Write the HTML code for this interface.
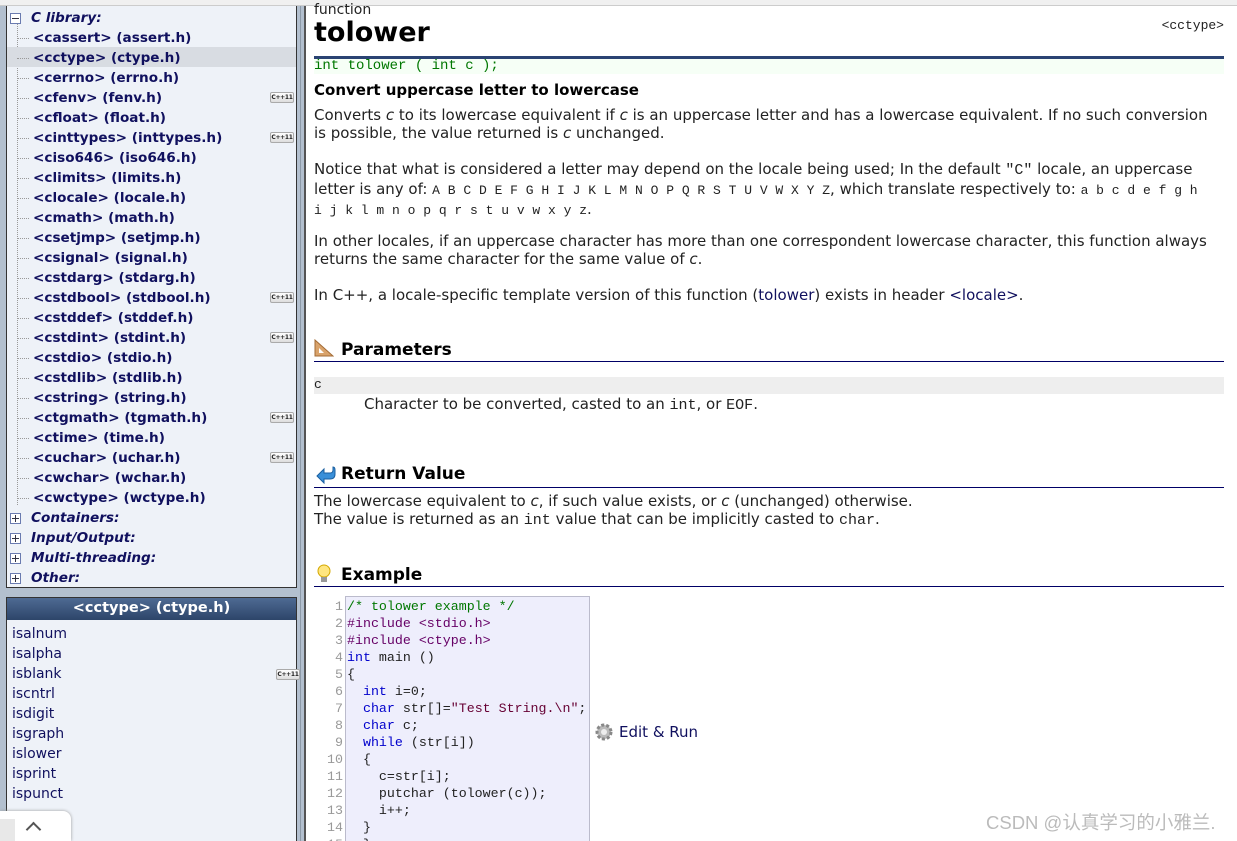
<!DOCTYPE html>
<html><head><meta charset="utf-8"><style>
*{margin:0;padding:0;box-sizing:border-box}
html,body{overflow:hidden}
body{width:1237px;height:841px;overflow:hidden;background:#fff;font-family:"DejaVu Sans",Verdana,sans-serif;position:relative}
.topbar{position:absolute;left:0;top:0;width:1237px;height:6px;background:#f0f0f0;border-bottom:1px solid #ccc}
.left{position:absolute;left:0;top:6px;width:300px;height:835px;background:#b3c0cf}
.sep{position:absolute;left:300px;top:6px;width:6px;height:835px;background:#b3c0cf;border-left:1px solid #8d9aa8;border-right:2px solid #555}
.tree{position:absolute;left:6px;top:0;width:291px;height:582px;background:#eef2f8;border:1px solid #333;border-top:none}
.it{position:absolute;left:0;width:289px;height:20px;font-size:13.6px;font-weight:bold;color:#10105e;line-height:20px;white-space:nowrap}
.it span{position:absolute;left:26px;top:1px}
.it .dot{position:absolute;left:10px;top:11px;width:12px;border-top:1px dotted #999}
.cat{font-style:italic}
.cat span{left:24px}
.box{position:absolute;left:3px;top:6px;width:11px;height:11px;border:1px solid #6a7bb0;background:#fff;}
.box:before{content:"";position:absolute;left:1px;top:4px;width:7px;height:1px;background:#334}
.box.p:after{content:"";position:absolute;left:4px;top:1px;width:1px;height:7px;background:#334}
.vl{position:absolute;left:10px;top:17px;height:482px;border-left:1px dotted #999}
.cpp{position:absolute;right:2px;top:5px;width:24px;height:11px;border:1px solid #aaa;border-radius:2px;background:linear-gradient(#fff,#ddd);font-size:6px;line-height:9px;text-align:center;color:#222;font-weight:bold;font-style:normal;overflow:hidden;letter-spacing:-0.3px}
.hd{position:absolute;left:6px;top:597px;width:291px;height:244px;background:#eef2f8;border:1px solid #333;border-bottom:none}
.hdt{height:22px;background:linear-gradient(#4e6a93,#2d4569);color:#fff;font-weight:bold;font-size:14.5px;text-align:center;line-height:21px}
.fn{position:absolute;left:5px;font-size:14px;color:#10105e;height:20px;line-height:20px}
.up{position:absolute;left:0;top:811px;width:71px;height:30px;background:#fff;border-radius:0 8px 0 0;box-shadow:0 0 3px #999}
.main{position:absolute;left:314px;top:2px;width:910px;height:839px;font-size:15px;color:#222}
.t{position:absolute;white-space:nowrap}
.mono{font-family:"Liberation Mono",monospace}
h2{position:absolute;font-size:17px;font-weight:bold;color:#000;white-space:nowrap}
.hr{position:absolute;left:0;width:910px;border-top:1px solid #000066}
.code{position:absolute;left:31px;top:594px;width:245px;height:260px;background:#eeeefc;border:1px solid #bbc}
.cl{position:absolute;font-family:"Liberation Mono",monospace;font-size:13.3px;white-space:pre;line-height:17px}
.kw{color:#0000cc}.pp{color:#660066}.cm{color:#007700}.st{color:#660033}
</style></head><body>
<div class="topbar"></div>
<div class="left">
<div class="tree">
<div class="vl"></div>
<div class="it cat" style="top:1px"><div class="box"></div><span>C library:</span></div>
<div class="it" style="top:21px"><div class="dot"></div><span>&lt;cassert&gt; (assert.h)</span></div>
<div class="it" style="top:41px;background:#d8dce2"><div class="dot"></div><span>&lt;cctype&gt; (ctype.h)</span></div>
<div class="it" style="top:61px"><div class="dot"></div><span>&lt;cerrno&gt; (errno.h)</span></div>
<div class="it" style="top:81px"><div class="dot"></div><span>&lt;cfenv&gt; (fenv.h)</span><div class="cpp">C++11</div></div>
<div class="it" style="top:101px"><div class="dot"></div><span>&lt;cfloat&gt; (float.h)</span></div>
<div class="it" style="top:121px"><div class="dot"></div><span>&lt;cinttypes&gt; (inttypes.h)</span><div class="cpp">C++11</div></div>
<div class="it" style="top:141px"><div class="dot"></div><span>&lt;ciso646&gt; (iso646.h)</span></div>
<div class="it" style="top:161px"><div class="dot"></div><span>&lt;climits&gt; (limits.h)</span></div>
<div class="it" style="top:181px"><div class="dot"></div><span>&lt;clocale&gt; (locale.h)</span></div>
<div class="it" style="top:201px"><div class="dot"></div><span>&lt;cmath&gt; (math.h)</span></div>
<div class="it" style="top:221px"><div class="dot"></div><span>&lt;csetjmp&gt; (setjmp.h)</span></div>
<div class="it" style="top:241px"><div class="dot"></div><span>&lt;csignal&gt; (signal.h)</span></div>
<div class="it" style="top:261px"><div class="dot"></div><span>&lt;cstdarg&gt; (stdarg.h)</span></div>
<div class="it" style="top:281px"><div class="dot"></div><span>&lt;cstdbool&gt; (stdbool.h)</span><div class="cpp">C++11</div></div>
<div class="it" style="top:301px"><div class="dot"></div><span>&lt;cstddef&gt; (stddef.h)</span></div>
<div class="it" style="top:321px"><div class="dot"></div><span>&lt;cstdint&gt; (stdint.h)</span><div class="cpp">C++11</div></div>
<div class="it" style="top:341px"><div class="dot"></div><span>&lt;cstdio&gt; (stdio.h)</span></div>
<div class="it" style="top:361px"><div class="dot"></div><span>&lt;cstdlib&gt; (stdlib.h)</span></div>
<div class="it" style="top:381px"><div class="dot"></div><span>&lt;cstring&gt; (string.h)</span></div>
<div class="it" style="top:401px"><div class="dot"></div><span>&lt;ctgmath&gt; (tgmath.h)</span><div class="cpp">C++11</div></div>
<div class="it" style="top:421px"><div class="dot"></div><span>&lt;ctime&gt; (time.h)</span></div>
<div class="it" style="top:441px"><div class="dot"></div><span>&lt;cuchar&gt; (uchar.h)</span><div class="cpp">C++11</div></div>
<div class="it" style="top:461px"><div class="dot"></div><span>&lt;cwchar&gt; (wchar.h)</span></div>
<div class="it" style="top:481px"><div class="dot"></div><span>&lt;cwctype&gt; (wctype.h)</span></div>
<div class="it cat" style="top:501px"><div class="box p"></div><span>Containers:</span></div>
<div class="it cat" style="top:521px"><div class="box p"></div><span>Input/Output:</span></div>
<div class="it cat" style="top:541px"><div class="box p"></div><span>Multi-threading:</span></div>
<div class="it cat" style="top:561px"><div class="box p"></div><span>Other:</span></div>
</div>
</div>
<div class="hd">
<div class="hdt">&lt;cctype&gt; (ctype.h)</div>
<div class="fn" style="top:26px">isalnum</div>
<div class="fn" style="top:46px">isalpha</div>
<div class="fn" style="top:66px;width:285px">isblank<div class="cpp" style="right:-3px">C++11</div></div>
<div class="fn" style="top:86px">iscntrl</div>
<div class="fn" style="top:106px">isdigit</div>
<div class="fn" style="top:126px">isgraph</div>
<div class="fn" style="top:146px">islower</div>
<div class="fn" style="top:166px">isprint</div>
<div class="fn" style="top:186px">ispunct</div>
</div>
<div class="up"><div style="position:absolute;left:0;top:8px;width:15px;height:22px;background:#e8e8e8"></div><div style="position:absolute;left:28px;top:13px;width:11px;height:11px;border-left:2px solid #555;border-top:2px solid #555;transform:rotate(45deg)"></div></div>
<div class="sep"></div>

<div class="main">
<div class="t" style="top:-2px;font-size:14px;line-height:20px">function</div>
<div class="t" style="top:15px;font-size:27px;font-weight:bold;color:#000">tolower</div>
<div class="t mono" style="right:0;top:16px;font-size:13px;color:#222">&lt;cctype&gt;</div>
<div style="position:absolute;left:0;top:54px;width:910px;height:3px;background:#2a4373"></div>
<div style="position:absolute;left:0;top:57px;width:910px;height:15px;background:#f6fff6"></div>
<div class="t mono" style="top:56px;font-size:14px;color:#007700">int tolower ( int c );</div>
<div class="t" style="top:79px;font-size:15px;font-weight:bold;color:#000">Convert uppercase letter to lowercase</div>
<div class="t" style="top:104px;line-height:18px">Converts <i>c</i> to its lowercase equivalent if <i>c</i> is an uppercase letter and has a lowercase equivalent. If no such conversion<br>is possible, the value returned is <i>c</i> unchanged.</div>
<div class="t" style="top:158px;line-height:18px">Notice that what is considered a letter may depend on the locale being used; In the default <span class="mono">"C"</span> locale, an uppercase<br>letter is any of: <span class="mono" style="font-size:13px">A B C D E F G H I J K L M N O P Q R S T U V W X Y Z</span>, which translate respectively to: <span class="mono" style="font-size:13px">a b c d e f g h</span><br><span class="mono" style="font-size:13px">i j k l m n o p q r s t u v w x y z</span>.</div>
<div class="t" style="top:230px;line-height:18px">In other locales, if an uppercase character has more than one correspondent lowercase character, this function always<br>returns the same character for the same value of <i>c</i>.</div>
<div class="t" style="top:284px;line-height:18px">In C++, a locale-specific template version of this function (<span style="color:#10105e">tolower</span>) exists in header <span style="color:#10105e">&lt;locale&gt;</span>.</div>

<svg style="position:absolute;left:0;top:337px" width="20" height="18"><path d="M1 17 L1 1 L19 17 Z" fill="#d9a36b" stroke="#a36b35"/><path d="M5 14 L5 9 L10 14 Z" fill="#fff"/></svg>
<h2 style="left:27px;top:338px">Parameters</h2>
<div class="hr" style="top:359px"></div>
<div style="position:absolute;left:0;top:375px;width:910px;height:17px;background:#eee"></div>
<div class="t mono" style="top:375px;font-size:13px">c</div>
<div class="t" style="top:393px;left:50px">Character to be converted, casted to an <span class="mono">int</span>, or <span class="mono">EOF</span>.</div>

<svg style="position:absolute;left:0;top:462px" width="22" height="20"><path d="M3 12 L10 5 L10 9 L16 9 Q19 9 19 6 L19 3 Q21 3 21 6 L21 10 Q21 15 16 15 L10 15 L10 19 Z" fill="#3a8fd8" stroke="#1a5fa0"/></svg>
<h2 style="left:27px;top:462px">Return Value</h2>
<div class="hr" style="top:485px"></div>
<div class="t" style="top:490px;line-height:18px">The lowercase equivalent to <i>c</i>, if such value exists, or <i>c</i> (unchanged) otherwise.<br>The value is returned as an <span class="mono">int</span> value that can be implicitly casted to <span class="mono">char</span>.</div>

<svg style="position:absolute;left:2px;top:562px" width="16" height="20"><circle cx="8" cy="7" r="6" fill="#ffe680" stroke="#d4a800"/><rect x="5" y="13" width="6" height="5" fill="#999"/></svg>
<h2 style="left:27px;top:563px">Example</h2>
<div class="hr" style="top:584px"></div>

<div class="code"></div>
<div class="cl" style="left:0;top:596px;width:29px;text-align:right;color:#999"> 1
 2
 3
 4
 5
 6
 7
 8
 9
10
11
12
13
14
15</div>
<div class="cl" style="left:33px;top:596px"><span class="cm">/* tolower example */</span>
<span class="pp">#include &lt;stdio.h&gt;</span>
<span class="pp">#include &lt;ctype.h&gt;</span>
<span class="kw">int</span> main ()
{
  <span class="kw">int</span> i=0;
  <span class="kw">char</span> str[]=<span class="st">"Test String.\n"</span>;
  <span class="kw">char</span> c;
  <span class="kw">while</span> (str[i])
  {
    c=str[i];
    putchar (tolower(c));
    i++;
  }
  }</div>
<svg style="position:absolute;left:281px;top:721px" width="18" height="18"><circle cx="9" cy="9" r="7" fill="#bbb" stroke="#888" stroke-dasharray="3 2" stroke-width="3"/><circle cx="9" cy="9" r="3" fill="#eee"/></svg>
<div class="t" style="left:305px;top:721px;color:#10105e">Edit &amp; Run</div>
</div>
<div class="t" style="left:986px;top:809px;font-size:18.5px;color:#bbb;font-family:'Liberation Sans','Noto Sans CJK SC',sans-serif">CSDN @认真学习的小雅兰.</div>
</body></html>
